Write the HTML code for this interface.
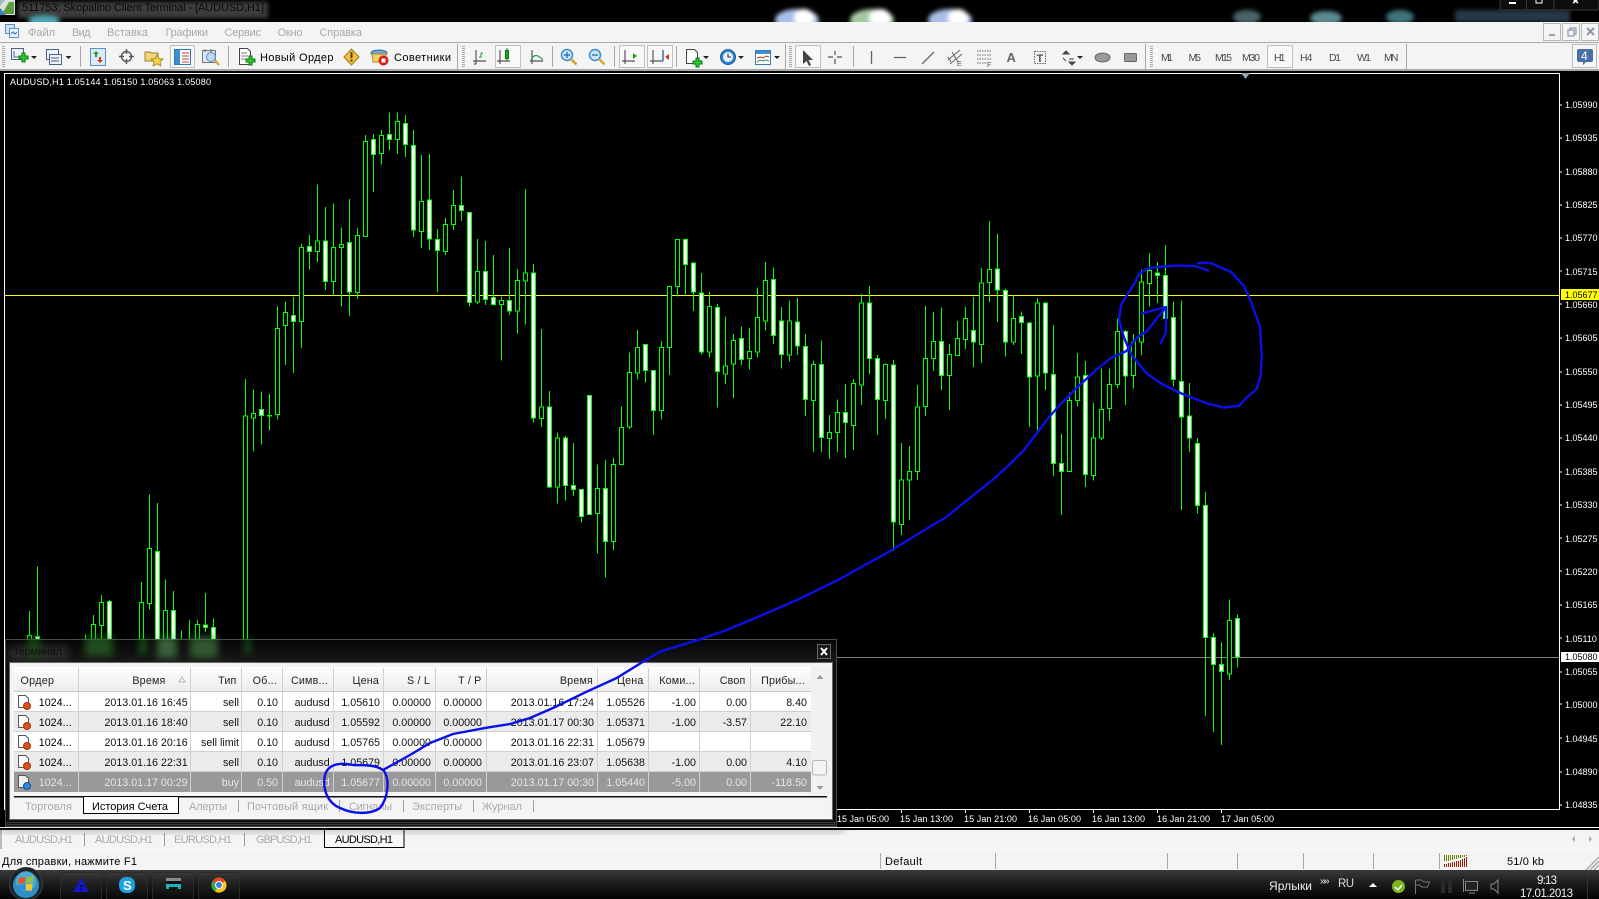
<!DOCTYPE html>
<html lang="ru"><head><meta charset="utf-8"><title>Skopalino Client Terminal</title>
<style>
html,body{margin:0;padding:0;background:#000;width:1599px;height:899px;overflow:hidden}
svg{display:block}
text{font-family:"Liberation Sans","Noto Sans CJK JP",sans-serif;font-size:11px;fill:#000}
.m{fill:#a8a8a8}.tb{fill:#4a4a4a;font-size:10.5px}
.ax{fill:#fff;font-size:9px}
.h{fill:#222;font-size:10.7px;text-anchor:end;letter-spacing:.2px}
.c{font-size:10.7px;text-anchor:end;fill:#111}
.s .c,.s text{fill:#e6e6e6}
.tg{fill:#a9a9a9}
.k{vector-effect:non-scaling-stroke;stroke:#00ff00;stroke-width:1}
.ic{fill:none;stroke:#555;stroke-width:1}
.wt{fill:#fff}
</style></head><body>
<svg width="1599" height="899" viewBox="0 0 1599 899" xmlns="http://www.w3.org/2000/svg">
<defs>
<filter id="b2" x="-50%" y="-50%" width="200%" height="200%"><feGaussianBlur stdDeviation="2"/></filter>
<filter id="b4" x="-50%" y="-50%" width="200%" height="200%"><feGaussianBlur stdDeviation="4"/></filter>
<linearGradient id="tk" x1="0" y1="0" x2="0" y2="1"><stop offset="0" stop-color="#3a3a3a"/><stop offset=".45" stop-color="#1c1c1c"/><stop offset="1" stop-color="#040404"/></linearGradient>
<linearGradient id="hd" x1="0" y1="0" x2="0" y2="1"><stop offset="0" stop-color="#fff"/><stop offset="1" stop-color="#ececec"/></linearGradient>
<linearGradient id="tt" x1="0" y1="0" x2="0" y2="1"><stop offset="0" stop-color="#050505"/><stop offset="1" stop-color="#181818"/></linearGradient>
<pattern id="dot" width="2" height="2" patternUnits="userSpaceOnUse"><rect width="2" height="2" fill="#fbfbfb"/><rect width="1" height="1" fill="#f0f0f0"/></pattern>
<clipPath id="top"><rect x="0" y="0" width="1599" height="22"/></clipPath>
</defs>

<!-- title bar -->
<rect width="1599" height="22" fill="#000"/>
<g clip-path="url(#top)">
<g filter="url(#b2)">
<rect x="18" y="2" width="250" height="16" fill="#3c3c3c"/>
<ellipse cx="44" cy="21" rx="16" ry="5" fill="#4aa5b5"/>
<ellipse cx="797" cy="20" rx="22" ry="11" fill="#a9bfe8"/><ellipse cx="804" cy="18" rx="10" ry="9" fill="#fff"/>
<ellipse cx="872" cy="20" rx="22" ry="11" fill="#a5c9a0"/><ellipse cx="880" cy="18" rx="11" ry="9" fill="#fff"/>
<ellipse cx="950" cy="20" rx="22" ry="11" fill="#a9bfe8"/><ellipse cx="958" cy="18" rx="10" ry="9" fill="#fff"/>
<ellipse cx="1247" cy="17" rx="14" ry="7" fill="#4a6468"/>
<ellipse cx="1326" cy="18" rx="16" ry="7" fill="#5c8a92"/>
<ellipse cx="1400" cy="17" rx="14" ry="7" fill="#3f737a"/>
<rect x="1455" y="10" width="115" height="12" fill="#26384a"/>
</g>
<path d="M0 0h15v15H0z" fill="#d9e2d5"/><path d="M2 14L9 2l5 0v12z" fill="#5a9e3e"/><path d="M0 8l6 7H0z" fill="#3b80c0"/><path d="M0 0h5L0 6z" fill="#9bb8c9"/>
<text x="22" y="11" style="fill:#0a0a0a" textLength="242">511753: Skopalino Client Terminal - [AUDUSD,H1]</text>
<rect x="1500" y="-2" width="99" height="12" rx="2" fill="#0d0d0d" stroke="#3a3a3a"/>
<path d="M1526.500 -2V10M1554 -2V10" stroke="#3a3a3a"/>
<path d="M1509 3h7" stroke="#fff" stroke-width="2"/><rect x="1536" y="-1" width="6" height="4" fill="none" stroke="#fff"/>
<path d="M1573 -1l5 4m0-4l-5 4" stroke="#fff" stroke-width="1.500"/>
</g>

<!-- menu bar -->
<rect y="22" width="1599" height="20" fill="#f4f4f4"/>
<rect y="42" width="1599" height="1" fill="#aaa"/>
<rect y="43" width="1599" height="26" fill="#f4f4f4"/>
<rect y="69" width="1599" height="2" fill="#a8a8a8"/>
<g transform="translate(5,24)"><rect x="0.500" y="0.500" width="9" height="9" fill="#cfe3f5" stroke="#5b8fc9"/><rect x="4.500" y="4.500" width="9" height="9" fill="#e8f2fb" stroke="#5b8fc9"/><path d="M6 10l2-2 2 2 2-2" stroke="#3b6fb0" fill="none"/></g>
<text class="m" x="28" y="36" textLength="27">Файл</text>
<text class="m" x="72" y="36" textLength="18.500">Вид</text>
<text class="m" x="107" y="36" textLength="41">Вставка</text>
<text class="m" x="165.500" y="36" textLength="42.500">Графики</text>
<text class="m" x="224.500" y="36" textLength="36.500">Сервис</text>
<text class="m" x="277.500" y="36" textLength="25">Окно</text>
<text class="m" x="319.500" y="36" textLength="42.500">Справка</text>
<g fill="#f4f4f4" stroke="#b5b5b5"><rect x="1543.500" y="23.500" width="17" height="17"/><rect x="1562.500" y="23.500" width="17" height="17"/><rect x="1581.500" y="23.500" width="17" height="17"/></g>
<path d="M1549 35h6" stroke="#98a4b8" stroke-width="2"/><path d="M1568 30h6v6h-6zM1570 30v-2h6v6h-2" fill="none" stroke="#8a98ae" stroke-width="1.200"/><path d="M1587 28l7 7m0-7l-7 7" stroke="#8a98ae" stroke-width="2"/>

<!-- toolbar grips & separators -->
<g stroke="#a8a8a8" stroke-dasharray="1 1"><path d="M3.500 46V67M463.500 46V67M790.500 46V67M1151.500 46V67" stroke-width="3"/></g>
<path d="M80.500 46V67M228.500 46V67M457.500 44V69M552.500 46V67M614.500 46V67M676.500 46V67M785.500 44V69M853.500 46V67M1145.500 44V69M1406.500 44V69" stroke="#a8a8a8"/>
<!-- pressed boxes -->
<g fill="url(#dot)" stroke="#c0c0c0"><rect x="170.500" y="45.500" width="24" height="22"/><rect x="495.500" y="45.500" width="25" height="22"/><rect x="619.500" y="45.500" width="25" height="22"/><rect x="647.500" y="45.500" width="25" height="22"/><rect x="795.500" y="45.500" width="25" height="22"/><rect x="1267.500" y="45.500" width="25" height="22"/></g>

<!-- new chart -->
<g transform="translate(11,48)"><rect x=".5" y=".5" width="12" height="11" fill="#eef3f9" stroke="#49628a"/><path d="M3 3v6h7" stroke="#49628a" fill="none"/><path d="M9 7h3V4h3v3h3v3h-3v3h-3v-3H9z" transform="translate(-1,1)" fill="#2fc832" stroke="#0a7a10"/></g>
<path d="M31 56h6l-3 3z" fill="#222"/>
<!-- profiles -->
<g transform="translate(46,49)"><rect x=".5" y=".5" width="12" height="10" fill="#eef3f9" stroke="#49628a"/><rect x="3.500" y="5.500" width="12" height="10" fill="#eef3f9" stroke="#49628a"/><path d="M5 9h8M5 12h8" stroke="#49628a"/></g>
<path d="M65.500 56h6l-3 3z" fill="#222"/>
<!-- market watch -->
<g transform="translate(90,48)"><rect x=".5" y=".5" width="15" height="17" fill="#dbeaf8" stroke="#5b8fc9"/><path d="M6 3l3 3H7v3H5V6H3z" fill="#25a025"/><path d="M10 15l-3-3h2V9h2v3h2z" fill="#d8381f"/></g>
<!-- crosshair circle -->
<g transform="translate(119,49)" fill="none" stroke="#555" stroke-width="1.400"><circle cx="7.500" cy="7.500" r="5"/><path d="M7.500 0v5M7.500 10v5M0 7.500h5M10 7.500h5"/></g>
<!-- folder star -->
<g transform="translate(145,49)"><path d="M0 3h5l1 1h7v8H0z" fill="#f3d67e" stroke="#a08030"/><path d="M12 6l2 3.600 4 .5-3 2.700.8 4-3.800-2-3.800 2 .8-4-3-2.700 4-.5z" fill="#f6d447" stroke="#a98a1c"/></g>
<!-- navigator -->
<g transform="translate(174,49)"><rect x=".5" y=".5" width="16" height="15" fill="#fff" stroke="#2e79b8"/><rect x="1" y="1" width="5" height="14" fill="#3a8fd0"/><path d="M8 4h7M8 7h7M8 10h7M8 13h7" stroke="#c04040"/></g>
<!-- tester -->
<g transform="translate(202,48)"><rect x=".5" y="2.500" width="13" height="12" fill="#dbe7f3" stroke="#777"/><circle cx="9" cy="9" r="4.500" fill="#bcd7ef" stroke="#5b8fc9"/><path d="M13 12l4 5" stroke="#d9a520" stroke-width="2.200"/><path d="M3 1v3M9 1v3" stroke="#666"/></g>
<!-- new order -->
<g transform="translate(239,48)"><path d="M.5.5h8l3 3v13H.5z" fill="#fff" stroke="#444"/><path d="M2 5h6M2 8h7M2 11h5" stroke="#777"/><path d="M9 9h3V6h3v3h3v3h-3v3h-3v-3H9z" transform="translate(-2,2)" fill="#2fc832" stroke="#0a7a10"/></g>
<text x="260" y="61" textLength="73.500">Новый Ордер</text>
<!-- warning -->
<path d="M351.500 49l7.500 8-7.500 8-7.500-8z" fill="#f0c040" stroke="#a07e10"/><path d="M351.500 52v6M351.500 59.500v2" stroke="#5a3a00" stroke-width="2"/>
<!-- hat / experts -->
<g transform="translate(371,49)"><ellipse cx="8" cy="4" rx="8" ry="3" fill="#6fa6d8" stroke="#3a6a9a"/><path d="M1 5h14l-1 8H2z" fill="#f2d16c" stroke="#a98a1c"/><circle cx="12.500" cy="11.500" r="5" fill="#d8201a"/><rect x="10.500" y="9.500" width="4" height="4" fill="#fff"/></g>
<text x="394" y="61" textLength="57">Советники</text>
<!-- chart types -->
<g fill="none" stroke="#555" stroke-width="1.200">
<path d="M476 50v14M473 61h13M474 64l2 0"/><path d="M500 50v14M497 61h13"/><path d="M532 50v14M530 61h13"/>
<path d="M625 50v14M622 61h13"/><path d="M653 50v14M650 61h13"/></g>
<path d="M481 53v4h-2M481 53h2" stroke="#0a9e20" fill="none"/>
<rect x="505.500" y="50.500" width="3" height="8" fill="#2fc832" stroke="#0a7a10"/><path d="M507 48v13" stroke="#0a7a10"/>
<path d="M531 60c3-6 6-6 12 0" fill="none" stroke="#2fa04a" stroke-width="1.200"/>
<path d="M633 53l4 3-4 3z" fill="#15a515"/><path d="M663 50v11" stroke="#3a6fa8" stroke-width="1.500"/><path d="M669 54l-4 3 4 3z" fill="#c53a10"/>
<!-- zoom -->
<g fill="none"><circle cx="567" cy="55" r="5.500" fill="#cfe3f7" stroke="#3a8fd0" stroke-width="1.500"/><path d="M564 55h6M567 52v6" stroke="#2a78c0" stroke-width="1.400"/><path d="M571.500 59.500l5 5" stroke="#d9a520" stroke-width="2.500"/>
<circle cx="595" cy="55" r="5.500" fill="#cfe3f7" stroke="#3a8fd0" stroke-width="1.500"/><path d="M592 55h6" stroke="#2a78c0" stroke-width="1.400"/><path d="M599.500 59.500l5 5" stroke="#d9a520" stroke-width="2.500"/></g>
<!-- indicators -->
<g transform="translate(686,49)"><path d="M.5.5h8l3 3v11H.5z" fill="#fff" stroke="#444"/><path d="M8 9h3V6h3v3h3v3h-3v3h-3v-3H8z" transform="translate(-1,3)" fill="#2fc832" stroke="#0a7a10"/></g>
<path d="M703 56h6l-3 3z" fill="#222"/>
<!-- clock -->
<circle cx="728" cy="57" r="7.500" fill="#2e86d0" stroke="#1e5a96"/><circle cx="728" cy="57" r="5" fill="#eaf2fa"/><path d="M728 53.500V57h3" stroke="#333" fill="none"/>
<path d="M738 56h6l-3 3z" fill="#222"/>
<!-- templates -->
<rect x="755.500" y="50.500" width="15" height="14" fill="#fff" stroke="#3a7ab8"/><rect x="756" y="51" width="14" height="3" fill="#3a8fd0"/><path d="M757 58l3-1 3 1 3-2 3 1" stroke="#b0341a" fill="none"/><path d="M757 62l3-2 3 1 3-1 3 1" stroke="#2a9a30" fill="none"/>
<path d="M774 56h6l-3 3z" fill="#222"/>
<!-- line tools -->
<path d="M803 50l0 14 3.500-3 2.500 5 2-1-2.500-5h4.500z" fill="#444"/>
<path d="M835 51v4M835 59v5M828 57h5M837 57h5" stroke="#555" stroke-width="1.200" fill="none"/>
<path d="M871.500 51v13M894 57.500h12M922 64l12-12" stroke="#666" stroke-width="1.300" fill="none"/>
<g stroke="#666" fill="none"><path d="M948 60l12-10M950 64l12-10M952 52l6 10M948 57l3 5"/></g>
<text x="957" y="66" style="font-size:7px;fill:#555">E</text>
<path d="M977 51h14M977 55h14M977 59h14M977 63h10" stroke="#666" stroke-dasharray="1.500 1" fill="none"/>
<text x="987" y="67" style="font-size:7px;fill:#555">F</text>
<text x="1006.500" y="62" style="font-size:13px;font-weight:bold;fill:#666">A</text>
<rect x="1034.500" y="51.500" width="11" height="12" fill="none" stroke="#666" stroke-dasharray="1.500 1"/><text x="1036.500" y="62" style="font-size:11px;font-weight:bold;fill:#555">T</text>
<path d="M1066 51l3 3h-6zM1072 65l-3-3h6zM1063 58l3 3M1069 59l5 0" fill="#444" stroke="#444"/><path d="M1077 56h6l-3 3z" fill="#222"/>
<ellipse cx="1102.500" cy="57.500" rx="7.500" ry="4.500" fill="#999" stroke="#666"/>
<rect x="1124.500" y="53.500" width="12" height="8" rx="1" fill="#999" stroke="#666"/>
<!-- periods -->
<text class="tb" x="1161" y="61" textLength="12">M1</text>
<text class="tb" x="1188.500" y="61" textLength="12.500">M5</text>
<text class="tb" x="1215" y="61" textLength="17">M15</text>
<text class="tb" x="1242" y="61" textLength="18">M30</text>
<text class="tb" x="1274" y="61" textLength="11.500">H1</text>
<text class="tb" x="1300" y="61" textLength="12.500">H4</text>
<text class="tb" x="1329" y="61" textLength="12">D1</text>
<text class="tb" x="1357" y="61" textLength="14">W1</text>
<text class="tb" x="1384" y="61" textLength="14.500">MN</text>
<!-- notification -->
<rect x="1572.500" y="44.500" width="24" height="23" fill="#f6f6f6" stroke="#bcbcbc"/>
<path d="M1579 49h12a2 2 0 0 1 2 2v9a2 2 0 0 1-2 2h-5l-3 3v-3h-4a2 2 0 0 1-2-2v-9a2 2 0 0 1 2-2z" fill="#4a6ea8"/>
<text x="1581" y="60" class="wt" style="font-size:12px;fill:#fff">4</text>

<!-- chart -->
<rect y="71" width="1599" height="759" fill="#000"/>
<path d="M4.500 73.500H1559.500V809.500H4.500z" fill="none" stroke="#fff"/>
<path d="M1241 73h9l-4.500 6z" fill="#8fa7bd"/>

<rect x="5" y="295" width="1554" height="1" fill="#ffff00"/>
<rect x="5" y="657" width="1554" height="1" fill="#808080"/>

<g transform="translate(0,100) scale(1,.3444)" shape-rendering="crispEdges">
<path class="k" fill="none" d="M29.500 1484V1600M37.500 1354V1600M85.500 1552V1600M93.500 1495V1600M101.500 1438V1565M109.500 1452V1600M141.500 1400V1600M149.500 1145V1480M157.500 1170V1600M165.500 1392V1600M173.500 1426V1600M181.500 1540V1600M189.500 1510V1600M197.500 1510V1600M205.500 1432V1545M213.500 1505V1600M245.500 810V1600M253.500 840V1020M261.500 846V1000M269.500 854V960M277.500 600V928M285.500 585V770M293.500 572V792M301.500 416V720M309.500 392V492M317.500 245V470M325.500 311V552M333.500 300V567M341.500 370V600M349.500 288V627M357.500 372V578M365.500 102V397M373.500 99V267M381.500 87V188M389.500 36V145M397.500 36V157M405.500 44V165M413.500 87V398M421.500 160V430M429.500 157V436M437.500 375V558M445.500 343V450M453.500 262V377M461.500 222V351M469.500 326V600M477.500 404V592M485.500 409V595M493.500 450V597M501.500 570V757M509.500 430V624M517.500 490V678M525.500 258V652M533.500 476V937M541.500 665V950M549.500 845V1127M557.500 965V1172M565.500 975V1163M573.500 996V1150M581.500 1131V1227M589.500 858V1203M597.500 1058V1317M605.500 1045V1387M613.500 1040V1306M621.500 890V1058M629.500 733V955M637.500 668V812M645.500 710V820M653.500 785V972M661.500 700V928M669.500 540V798M677.500 405V570M685.500 402V565M693.500 474V612M701.500 502V739M709.500 558V748M717.500 592V893M725.500 628V825M733.500 680V865M741.500 658V770M749.500 662V783M757.500 544V748M765.500 470V670M773.500 486V708M781.500 601V780M789.500 582V760M797.500 575V740M805.500 680V918M813.500 756V1022M821.500 698V1022M829.500 915V1042M837.500 870V1022M845.500 825V1040M853.500 810V1016M861.500 563V886M869.500 540V795M877.500 740V973M885.500 765V926M893.500 755V1310M901.500 996V1263M909.500 1005V1220M917.500 828V1103M925.500 598V918M933.500 615V787M941.500 603V842M949.500 708V900M957.500 642V742M965.500 601V723M973.500 572V775M981.500 488V764M989.500 351V587M997.500 389V645M1005.500 548V745M1013.500 566V712M1021.500 614V738M1029.500 645V950M1037.500 575V958M1045.500 590V842M1053.500 653V1092M1061.500 970V1205M1069.500 850V1079M1077.500 735V890M1085.500 758V1123M1093.500 880V1105M1101.500 780V987M1109.500 780V932M1117.500 635V838M1125.500 668V886M1133.500 680V838M1141.500 492V740M1149.500 444V600M1157.500 470V590M1165.500 421V635M1173.500 585V832M1181.500 582V1190M1189.500 822V1022M1197.500 982V1200M1205.500 1138V1789M1213.500 1548V1835M1221.500 1575V1873M1229.500 1450V1684M1237.500 1494V1648"/>
<path class="k" fill="#000" d="M27.500 1555h4V1600h-4zM91.500 1523h4V1600h-4zM99.500 1459h4V1526h-4zM139.500 1459h4V1600h-4zM147.500 1302h4V1462h-4zM163.500 1482h4V1600h-4zM195.500 1523h4V1600h-4zM243.500 918h4V1600h-4zM251.500 910h4V924h-4zM267.500 916h4V917h-4zM275.500 663h4V913h-4zM283.500 617h4V655h-4zM299.500 428h4V643h-4zM315.500 410h4V440h-4zM331.500 428h4V527h-4zM339.500 419h4V428h-4zM355.500 393h4V559h-4zM363.500 120h4V397h-4zM379.500 103h4V156h-4zM395.500 62h4V115h-4zM419.500 294h4V382h-4zM443.500 361h4V440h-4zM451.500 306h4V362h-4zM475.500 498h4V586h-4zM499.500 582h4V594h-4zM515.500 524h4V612h-4zM523.500 503h4V525h-4zM539.500 892h4V925h-4zM555.500 982h4V1123h-4zM595.500 1128h4V1201h-4zM611.500 1058h4V1282h-4zM619.500 951h4V1058h-4zM627.500 791h4V949h-4zM635.500 718h4V792h-4zM659.500 718h4V902h-4zM667.500 541h4V718h-4zM675.500 405h4V542h-4zM707.500 599h4V731h-4zM723.500 773h4V795h-4zM731.500 698h4V766h-4zM747.500 730h4V751h-4zM755.500 631h4V731h-4zM763.500 524h4V641h-4zM787.500 641h4V741h-4zM811.500 768h4V873h-4zM827.500 965h4V983h-4zM835.500 907h4V965h-4zM851.500 823h4V945h-4zM859.500 590h4V827h-4zM883.500 768h4V873h-4zM899.500 1104h4V1233h-4zM907.500 1078h4V1104h-4zM915.500 892h4V1078h-4zM923.500 750h4V890h-4zM931.500 701h4V751h-4zM947.500 739h4V800h-4zM955.500 692h4V742h-4zM963.500 634h4V695h-4zM979.500 532h4V710h-4zM987.500 492h4V530h-4zM1011.500 634h4V702h-4zM1035.500 589h4V802h-4zM1067.500 872h4V1079h-4zM1075.500 805h4V873h-4zM1091.500 982h4V1090h-4zM1099.500 898h4V982h-4zM1107.500 826h4V896h-4zM1115.500 672h4V826h-4zM1131.500 703h4V800h-4zM1139.500 529h4V702h-4zM1147.500 495h4V533h-4zM1227.500 1511h4V1666h-4z"/>
<path class="k" fill="#fff" d="M35.500 1558h4V1600h-4zM107.500 1456h4V1600h-4zM155.500 1311h4V1600h-4zM171.500 1482h4V1600h-4zM203.500 1525h4V1532h-4zM211.500 1531h4V1600h-4zM259.500 898h4V916h-4zM291.500 625h4V643h-4zM307.500 425h4V440h-4zM323.500 410h4V527h-4zM347.500 414h4V558h-4zM371.500 114h4V158h-4zM387.500 100h4V114h-4zM403.500 68h4V129h-4zM411.500 132h4V378h-4zM427.500 291h4V403h-4zM435.500 405h4V437h-4zM459.500 306h4V321h-4zM467.500 326h4V588h-4zM483.500 498h4V579h-4zM491.500 573h4V594h-4zM507.500 582h4V612h-4zM531.500 503h4V924h-4zM547.500 892h4V1123h-4zM563.500 982h4V1120h-4zM571.500 1119h4V1131h-4zM579.500 1131h4V1210h-4zM587.500 858h4V1203h-4zM603.500 1128h4V1282h-4zM643.500 710h4V786h-4zM651.500 785h4V902h-4zM683.500 405h4V478h-4zM691.500 474h4V558h-4zM699.500 560h4V731h-4zM715.500 602h4V789h-4zM739.500 692h4V754h-4zM771.500 521h4V684h-4zM779.500 641h4V739h-4zM795.500 644h4V715h-4zM803.500 716h4V870h-4zM819.500 768h4V980h-4zM843.500 907h4V937h-4zM867.500 590h4V750h-4zM875.500 750h4V870h-4zM891.500 770h4V1226h-4zM939.500 701h4V800h-4zM971.500 669h4V702h-4zM995.500 490h4V551h-4zM1003.500 553h4V702h-4zM1019.500 628h4V646h-4zM1027.500 647h4V805h-4zM1043.500 590h4V792h-4zM1051.500 797h4V1056h-4zM1059.500 1055h4V1078h-4zM1083.500 800h4V1087h-4zM1123.500 672h4V802h-4zM1155.500 503h4V510h-4zM1163.500 510h4V635h-4zM1171.500 632h4V812h-4zM1179.500 818h4V921h-4zM1187.500 917h4V982h-4zM1195.500 997h4V1178h-4zM1203.500 1178h4V1560h-4zM1211.500 1560h4V1639h-4zM1219.500 1639h4V1660h-4zM1235.500 1506h4V1618h-4z"/>
</g>

<!-- chart header -->
<text class="ax" x="10" y="85" textLength="201">AUDUSD,H1  1.05144 1.05150 1.05063 1.05080</text>

<!-- price axis -->
<g stroke="#fff"><path d="M1559 105h3M1559 138h3M1559 172h3M1559 205h3M1559 238h3M1559 271h3M1559 304h3M1559 338h3M1559 372h3M1559 405h3M1559 438h3M1559 472h3M1559 505h3M1559 538h3M1559 571h3M1559 605h3M1559 638h3M1559 672h3M1559 704h3M1559 738h3M1559 772h3M1559 805h3"/></g>
<g>
<text class="ax" x="1565" y="108">1.05990</text><text class="ax" x="1565" y="141">1.05935</text><text class="ax" x="1565" y="175">1.05880</text><text class="ax" x="1565" y="208">1.05825</text><text class="ax" x="1565" y="241">1.05770</text><text class="ax" x="1565" y="275">1.05715</text><text class="ax" x="1565" y="308">1.05660</text><text class="ax" x="1565" y="341">1.05605</text><text class="ax" x="1565" y="375">1.05550</text><text class="ax" x="1565" y="408">1.05495</text><text class="ax" x="1565" y="441">1.05440</text><text class="ax" x="1565" y="475">1.05385</text><text class="ax" x="1565" y="508">1.05330</text><text class="ax" x="1565" y="542">1.05275</text><text class="ax" x="1565" y="575">1.05220</text><text class="ax" x="1565" y="608">1.05165</text><text class="ax" x="1565" y="642">1.05110</text><text class="ax" x="1565" y="675">1.05055</text><text class="ax" x="1565" y="708">1.05000</text><text class="ax" x="1565" y="742">1.04945</text><text class="ax" x="1565" y="775">1.04890</text><text class="ax" x="1565" y="808">1.04835</text>
</g>
<rect x="1561" y="289" width="38" height="11" fill="#ffff00"/><text x="1565" y="298" style="font-size:9px;fill:#000">1.05677</text>
<rect x="1561" y="652" width="38" height="10" fill="#fff"/><text x="1565" y="660" style="font-size:9px;fill:#000">1.05080</text>

<!-- time axis -->
<path d="M901.500 809v4M965.500 809v4M1029.500 809v4M1093.500 809v4M1157.500 809v4M1221.500 809v4" stroke="#fff"/>
<text class="ax" x="837" y="822" textLength="52">15 Jan 05:00</text><text class="ax" x="900" y="822" textLength="53">15 Jan 13:00</text><text class="ax" x="964" y="822" textLength="53">15 Jan 21:00</text><text class="ax" x="1028" y="822" textLength="53">16 Jan 05:00</text><text class="ax" x="1092" y="822" textLength="53">16 Jan 13:00</text><text class="ax" x="1157" y="822" textLength="53">16 Jan 21:00</text><text class="ax" x="1221" y="822" textLength="53">17 Jan 05:00</text>

<!-- bottom white line + tab bar -->
<rect y="827" width="1599" height="1" fill="#fff"/>
<rect y="830" width="1599" height="20" fill="#f4f4f4"/>
<rect y="849" width="1599" height="1" fill="#fafafa"/>
<rect y="850" width="1599" height="20" fill="#f4f4f4"/>
<rect x="0" y="829" width="2" height="20" fill="#bbb"/>
<path d="M84.500 833v13M164.500 833v13M244.500 833v13" stroke="#999"/>
<text class="tg" x="15" y="843" textLength="58">AUDUSD,H1</text><text class="tg" x="95" y="843" textLength="58">AUDUSD,H1</text><text class="tg" x="174" y="843" textLength="58">EURUSD,H1</text><text class="tg" x="256" y="843" textLength="56">GBPUSD,H1</text>
<rect x="324.500" y="829.500" width="79.500" height="18" fill="#f8f8f8" stroke="#000"/>
<path d="M0 829.500H324" stroke="#111"/>
<text x="335" y="843" textLength="58">AUDUSD,H1</text>
<path d="M1575 836v6l-3-3zM1589 836v6l3-3z" fill="#aaa"/>

<!-- status bar -->
<text x="2" y="865" textLength="135">Для справки, нажмите F1</text>
<path d="M880.500 853v16M995.500 853v16M1167.500 853v16M1237.500 853v16M1303.500 853v16M1373.500 853v16M1439.500 853v16" stroke="#aaa"/>
<text x="885" y="865" textLength="37">Default</text>
<g stroke-width="1" shape-rendering="crispEdges">
<path d="M1444.500 855v6M1446.500 855v6M1448.500 855v6M1450.500 855v5M1452.500 855v5M1454.500 855v4M1456.500 855v4M1458.500 855v3M1460.500 855v3M1462.500 855v2M1464.500 855v2M1466.500 855v1" stroke="#6b7f00"/>
<path d="M1444.500 864v3M1446.500 864v3M1448.500 863v4M1450.500 863v4M1452.500 862v5M1454.500 862v5M1456.500 861v6M1458.500 861v6M1460.500 860v7M1462.500 859v8M1464.500 858v9M1466.500 857v10" stroke="#9a1a00"/>
</g>
<text x="1507" y="865" textLength="37">51/0 kb</text>
<path d="M1586 870l13-13M1590 870l9-9M1594 870l5-5" stroke="#aaa" stroke-width="1.500"/>

<!-- taskbar -->
<rect y="870" width="1599" height="29" fill="url(#tk)"/>
<g fill="#ffffff" fill-opacity=".025" stroke="#2c2c2c"><rect x="60.500" y="872.500" width="41" height="27" rx="2"/><rect x="106.500" y="872.500" width="41" height="27" rx="2"/><rect x="152.500" y="872.500" width="41" height="27" rx="2"/><rect x="198.500" y="872.500" width="41" height="27" rx="2"/></g>
<circle cx="26" cy="884" r="16.500" fill="#1a2328" stroke="#3a3f42"/>
<circle cx="26" cy="885" r="13" fill="#2d8fc4"/><circle cx="26" cy="881" r="10" fill="#5db5dc" opacity=".7"/>
<path d="M19 878l6-1v6l-7 1z" fill="#e8532a"/><path d="M26.500 877l7-1-1 7-6.500 0z" fill="#8cc63f"/><path d="M18 885l7-1v6l-7 1z" fill="#2f8fd8"/><path d="M26 884h6.500l-1 7-5.500-1z" fill="#f6c52a"/>
<path d="M81 878l8 14H73z" fill="#1218c8"/><path d="M79 885h5l-2 2v4h-1v-4z" fill="#0a0a30"/>
<rect x="119" y="877" width="16" height="16" rx="7" fill="#1ea3e0"/><text x="123" y="890" style="font-size:13px;font-weight:bold;fill:#fff">S</text>
<rect x="166" y="878" width="15" height="3" fill="#8a8a8a"/><rect x="166" y="881" width="15" height="3" fill="#111"/><rect x="166" y="884" width="15" height="5" fill="#20b0b8"/><rect x="169" y="887" width="9" height="3" fill="#111"/>
<g><circle cx="219" cy="885" r="7.500" fill="#e8452c"/><path d="M219 885L212.500 881A7.500 7.500 0 0 0 215 891.500z" fill="#32a852"/><path d="M219 885L215 891.500A7.500 7.500 0 0 0 226.500 885z" fill="#f5c518"/><path d="M219 885L226.500 885A7.500 7.500 0 0 0 225 881z" fill="#f5c518"/><circle cx="219" cy="885" r="3.500" fill="#3f7fe0" stroke="#fff"/></g>
<text x="1269" y="890" class="wt" style="fill:#f0f0f0;font-size:12px" textLength="43">Ярлыки</text>
<text x="1320" y="884" style="fill:#f0f0f0;font-size:10px">»</text><text x="1324" y="884" style="fill:#f0f0f0;font-size:10px">»</text>
<text x="1338" y="887" style="fill:#ddd;font-size:11.500px" textLength="16">RU</text>
<path d="M1369 887h8l-4-4z" fill="#fff"/>
<circle cx="1398.500" cy="886.500" r="6.500" fill="#7ab51d"/><path d="M1395 887l3 3 4-5" stroke="#fff" fill="none" stroke-width="1.500"/>
<path d="M1415.500 880v14M1415.500 880h6l2 2h6l-2 5h-6l-2-2h-4" fill="none" stroke="#777"/>
<path d="M1441 881h4v12h-4zM1448 881h4v12h-4z" fill="#2a2a2a"/>
<rect x="1465.500" y="881.500" width="12" height="9" fill="#222" stroke="#888"/><path d="M1463.500 879v13M1469 893h6" stroke="#888"/>
<path d="M1491 884h3l4-4v13l-4-4h-3z" fill="none" stroke="#888"/>
<text x="1537" y="884" style="fill:#f0f0f0;font-size:11.500px" textLength="20">9:13</text>
<text x="1520" y="897" style="fill:#f0f0f0;font-size:11.500px" textLength="53">17.01.2013</text>
<path d="M1587.500 873v26" stroke="#333"/>

<!-- terminal -->
<g filter="url(#b4)" opacity=".25"><rect x="0" y="826" width="845" height="6" fill="#000"/></g>
<rect x="5.500" y="639.500" width="831" height="187" fill="#0d0d0d" stroke="#4c4c4c"/>
<rect x="6" y="640" width="830" height="22" fill="url(#tt)"/>
<g filter="url(#b4)" opacity=".6">
<rect x="10" y="646" width="58" height="14" fill="#3c3c3c"/>
<rect x="28" y="636" width="12" height="22" fill="#1a6a1a"/>
<rect x="85" y="636" width="28" height="20" fill="#2d7a2d"/>
<rect x="140" y="636" width="6" height="18" fill="#2aa02a"/>
<rect x="157" y="636" width="20" height="22" fill="#5a9a5a"/>
<rect x="190" y="636" width="28" height="22" fill="#4a8a4a"/>
<rect x="245" y="636" width="5" height="18" fill="#2a8a2a"/>
</g>
<text x="13" y="655" textLength="49" style="fill:#0e0e0e">Терминал</text>
<rect x="817.500" y="644.500" width="13" height="14" fill="#1a1a1a" stroke="#666"/>
<path d="M821 648l6 7m0-7l-6 7" stroke="#fff" stroke-width="2"/>
<rect x="9.500" y="662.500" width="823" height="157" fill="#f1f1f1" stroke="#6a6a6a"/>
<rect x="11" y="664" width="820" height="155" fill="#f4f4f4"/>
<rect x="6" y="820" width="830" height="6" fill="#111"/>
<rect x="7.500" y="822.500" width="827" height="2" fill="none" stroke="#3a3a3a"/>

<!-- table -->
<rect x="14" y="667" width="797" height="129" fill="#fff"/>
<rect x="14" y="667" width="797" height="24" fill="url(#hd)"/>
<path d="M14 691.500H811" stroke="#c8c8c8"/>
<rect x="14" y="712" width="797" height="20" fill="#ebebeb"/>
<rect x="14" y="752" width="797" height="20" fill="#ebebeb"/>
<rect x="14" y="772" width="797" height="20" fill="#999"/>
<rect x="14" y="792" width="797" height="4" fill="#f4f4f4"/>
<path d="M14 711.500H811M14 731.500H811M14 751.500H811M14 771.500H811" stroke="#d0d0d0"/>
<path d="M78.500 668v124M190.500 668v124M241.500 668v124M282.500 668v124M333.500 668v124M383.500 668v124M435.500 668v124M486.500 668v124M597.500 668v124M648.500 668v124M699.500 668v124M750.500 668v124" stroke="#d0d0d0"/>
<!-- headers -->
<g>
<text x="20.500" y="684" style="fill:#222;font-size:10.700px" textLength="33.500">Ордер</text>
<text class="h" x="165.500" y="684">Время</text>
<path d="M182 677l-3 5h6z" fill="none" stroke="#bbb"/>
<text class="h" x="236.500" y="684">Тип</text>
<text class="h" x="277" y="684">Об...</text>
<text class="h" x="328" y="684">Симв...</text>
<text class="h" x="379" y="684">Цена</text>
<text class="h" x="430" y="684">S / L</text>
<text class="h" x="481.500" y="684">T / P</text>
<text class="h" x="593" y="684">Время</text>
<text class="h" x="643.500" y="684">Цена</text>
<text class="h" x="695" y="684">Коми...</text>
<text class="h" x="745.500" y="684">Своп</text>
<text class="h" x="805" y="684">Прибы...</text>
</g>
<!-- rows -->
<g>
<g><path d="M18.500 695.500h7l3 3v9h-10z" fill="#fff" stroke="#555"/><circle cx="27" cy="706" r="3.500" fill="#e0501a" stroke="#a03010"/>
<text x="38.700" y="706" style="font-size:10.700px" textLength="33">1024...</text><text class="c" x="187.700" y="706">2013.01.16 16:45</text><text class="c" x="239" y="706">sell</text><text class="c" x="278" y="706">0.10</text><text class="c" x="329.700" y="706">audusd</text><text class="c" x="380" y="706">1.05610</text><text class="c" x="431" y="706">0.00000</text><text class="c" x="482" y="706">0.00000</text><text class="c" x="594" y="706">2013.01.16 17:24</text><text class="c" x="645" y="706">1.05526</text><text class="c" x="696" y="706">-1.00</text><text class="c" x="747" y="706">0.00</text><text class="c" x="807" y="706">8.40</text></g>
<g><path d="M18.500 715.500h7l3 3v9h-10z" fill="#fff" stroke="#555"/><circle cx="27" cy="726" r="3.500" fill="#e0501a" stroke="#a03010"/>
<text x="38.700" y="726" style="font-size:10.700px" textLength="33">1024...</text><text class="c" x="187.700" y="726">2013.01.16 18:40</text><text class="c" x="239" y="726">sell</text><text class="c" x="278" y="726">0.10</text><text class="c" x="329.700" y="726">audusd</text><text class="c" x="380" y="726">1.05592</text><text class="c" x="431" y="726">0.00000</text><text class="c" x="482" y="726">0.00000</text><text class="c" x="594" y="726">2013.01.17 00:30</text><text class="c" x="645" y="726">1.05371</text><text class="c" x="696" y="726">-1.00</text><text class="c" x="747" y="726">-3.57</text><text class="c" x="807" y="726">22.10</text></g>
<g><path d="M18.500 735.500h7l3 3v9h-10z" fill="#fff" stroke="#555"/><circle cx="27" cy="746" r="3.500" fill="#e0501a" stroke="#a03010"/>
<text x="38.700" y="746" style="font-size:10.700px" textLength="33">1024...</text><text class="c" x="187.700" y="746">2013.01.16 20:16</text><text class="c" x="239" y="746">sell limit</text><text class="c" x="278" y="746">0.10</text><text class="c" x="329.700" y="746">audusd</text><text class="c" x="380" y="746">1.05765</text><text class="c" x="431" y="746">0.00000</text><text class="c" x="482" y="746">0.00000</text><text class="c" x="594" y="746">2013.01.16 22:31</text><text class="c" x="645" y="746">1.05679</text></g>
<g><path d="M18.500 755.500h7l3 3v9h-10z" fill="#fff" stroke="#555"/><circle cx="27" cy="766" r="3.500" fill="#e0501a" stroke="#a03010"/>
<text x="38.700" y="766" style="font-size:10.700px" textLength="33">1024...</text><text class="c" x="187.700" y="766">2013.01.16 22:31</text><text class="c" x="239" y="766">sell</text><text class="c" x="278" y="766">0.10</text><text class="c" x="329.700" y="766">audusd</text><text class="c" x="380" y="766">1.05679</text><text class="c" x="431" y="766">0.00000</text><text class="c" x="482" y="766">0.00000</text><text class="c" x="594" y="766">2013.01.16 23:07</text><text class="c" x="645" y="766">1.05638</text><text class="c" x="696" y="766">-1.00</text><text class="c" x="747" y="766">0.00</text><text class="c" x="807" y="766">4.10</text></g>
<g class="s"><path d="M18.500 775.500h7l3 3v9h-10z" fill="#eee" stroke="#555"/><circle cx="27" cy="786" r="3.500" fill="#2a8ae0" stroke="#10508a"/>
<text x="38.700" y="786" style="font-size:10.700px;fill:#e6e6e6" textLength="33">1024...</text><text class="c" x="187.700" y="786">2013.01.17 00:29</text><text class="c" x="239" y="786">buy</text><text class="c" x="278" y="786">0.50</text><text class="c" x="329.700" y="786">audusd</text><text class="c" x="380" y="786">1.05677</text><text class="c" x="431" y="786">0.00000</text><text class="c" x="482" y="786">0.00000</text><text class="c" x="594" y="786">2013.01.17 00:30</text><text class="c" x="645" y="786">1.05440</text><text class="c" x="696" y="786">-5.00</text><text class="c" x="747" y="786">0.00</text><text class="c" x="807" y="786">-118.50</text></g>
</g>
<!-- scrollbar -->
<rect x="811" y="667" width="19" height="129" fill="#f1f1f1"/>
<path d="M816.500 679h7l-3.500-4zM816.500 786h7l-3.500 4z" fill="#9a9a9a"/>
<rect x="812.500" y="760.500" width="14" height="14.500" rx="2" fill="#f4f4f4" stroke="#b5b5b5"/>
<!-- terminal tabs -->
<rect x="14" y="796" width="813" height="1.500" fill="#111"/>
<rect x="83.500" y="796.500" width="95" height="17" fill="#fff" stroke="#000"/>
<text class="tg" x="25" y="810" textLength="47">Торговля</text>
<text x="92" y="810" textLength="76">История Счета</text>
<text class="tg" x="189" y="810" textLength="38">Алерты</text>
<text class="tg" x="247" y="810" textLength="81">Почтовый ящик</text>
<text class="tg" x="349" y="810" textLength="43">Сигналы</text>
<text class="tg" x="412" y="810" textLength="50">Эксперты</text>
<text class="tg" x="482" y="810" textLength="40">Журнал</text>
<path d="M238.500 800v12M339.500 800v12M403.500 800v12M473.500 800v12M533.500 800v12" stroke="#a0a0a0"/>

<!-- hand drawn ink -->
<g fill="none" stroke="#0a10e6" stroke-width="2.400" stroke-linejoin="round" stroke-linecap="round">
<path d="M383 770L410 755L430 743L453 734L486.700 727.700L510 724L530 718L553 708L586.700 691.700L616.700 678L643 661.700L660 651.700L700 639.300L726.700 630L760 616L800 598.600L838 580L892 550L935 523.600L945 518L978.600 491L996 477L1009 465L1024.500 449.500L1040 429L1050 416L1060 405L1075.500 389L1096 370L1111 358L1126.500 351L1137 337.600L1147 331L1166 307L1142 313.500M1166 307L1166 332L1161 343"/>
<path d="M353 765C338 762 328 765 325 775C322 790 328 803 340 808C355 815 372 814 380 808C388 798 390 780 384 771C378 765 365 765 353 765"/>
<path d="M1208 270.500L1195 266L1177.500 265.600L1157 267L1147 268.700L1139 274L1134 284L1126.500 296L1121 305L1119 320L1124 337.600L1131.600 355L1147 373.800L1162 384L1182.600 394L1208 403.700L1223.500 407.500L1239 405.800L1246 398L1256.600 389L1260.700 375.500L1261.700 355L1260 327L1251.500 303L1244 286L1231 272L1210.700 263L1198 263"/>
</g>
</svg>
</body></html>
